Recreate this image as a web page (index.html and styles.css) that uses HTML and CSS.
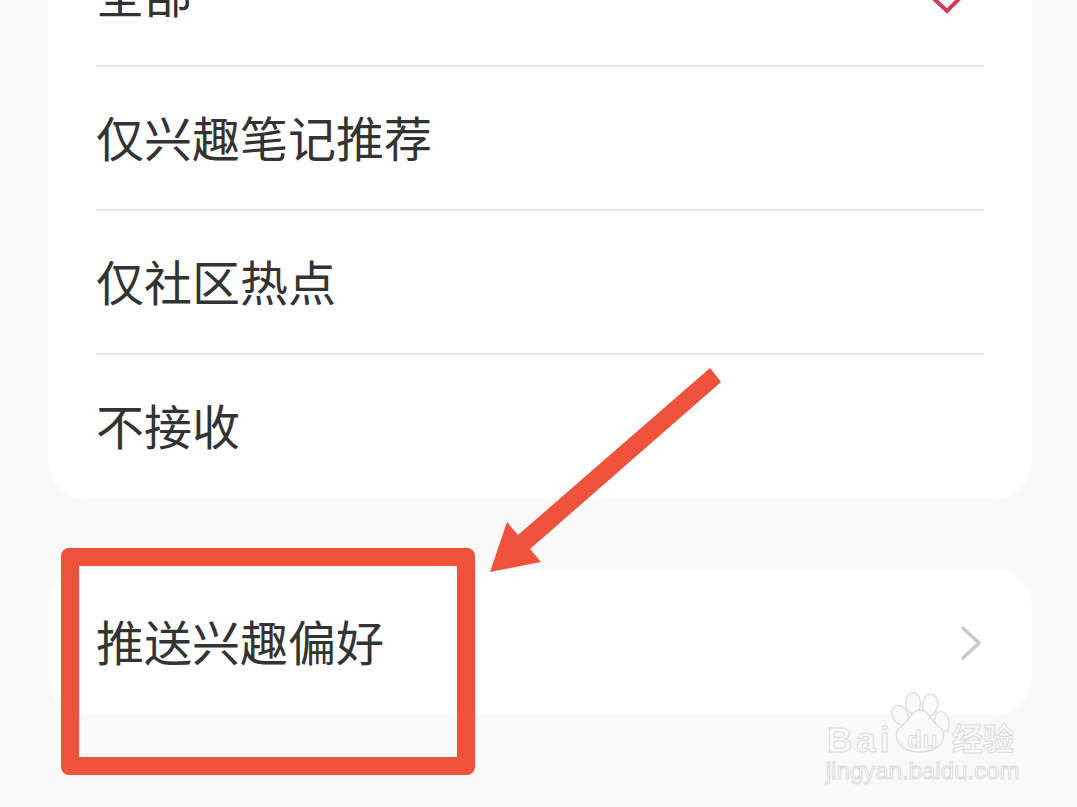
FILE: index.html
```html
<!DOCTYPE html>
<html lang="zh-CN">
<head>
<meta charset="utf-8">
<title>推送兴趣偏好</title>
<link rel="stylesheet" href="styles.css">
</head>
<body>
<main class="screen">
  <section class="card">
    <div class="row">
      <span>全部</span>
      <svg class="check" width="36" height="36" viewBox="0 0 36 36"><polyline points="2,20 18,35 33,20"/></svg>
    </div>
    <div class="row"><span>仅兴趣笔记推荐</span></div>
    <div class="row"><span>仅社区热点</span></div>
    <div class="row"><span>不接收</span></div>
  </section>
  <section class="card card-single">
    <div class="row">
      <span>推送兴趣偏好</span>
      <svg class="chevron" width="24" height="36" viewBox="0 0 24 36"><polyline points="4,3 20,18 4,33"/></svg>
    </div>
  </section>
</main>

<div class="highlight-box"></div>
<svg class="arrow" width="1077" height="807" viewBox="0 0 1077 807"><polygon points="710,368 721,382 530,549 541,562 490,572 507,522 518,535"/></svg>

<div class="watermark">
  <div class="wm-top">
    <span class="wm-bai">Bai</span>
    <svg class="wm-paw" width="66" height="62" viewBox="0 0 66 62">
      <ellipse cx="14" cy="23" rx="7.500" ry="10" transform="rotate(-25 14 23)"/>
      <ellipse cx="27" cy="11" rx="7.500" ry="10.500"/>
      <ellipse cx="44" cy="13" rx="7.500" ry="11" transform="rotate(8 44 13)"/>
      <ellipse cx="56" cy="30" rx="7" ry="10.500" transform="rotate(-15 56 30)"/>
      <path d="M34 18 C26 18 24 28 17 33 C11 37 9 42 11 47 C13 56 24 60 34 60 C44 60 55 56 57 47 C59 42 57 37 51 33 C44 28 42 18 34 18 Z"/>
    </svg>
    <span class="wm-du">du</span>
    <span class="wm-cn">经验</span>
  </div>
  <div class="wm-url">jingyan.baidu.com</div>
</div>
</body>
</html>
```
FILE: styles.css
```css
* { box-sizing: border-box; }

html, body {
  margin: 0;
  height: 807px;
  overflow: hidden;
  background: #f9f9f9;
}

body {
  position: relative;
  width: 1077px;
  font-family: "Noto Sans CJK SC", "Noto Sans", sans-serif;
  color: #333;
}

.screen {
  display: flex;
  flex-direction: column;
  gap: 72px;
  margin-top: -78px;
  padding: 0 45px 0 48px;
}

.card {
  background: #fff;
  border-radius: 36px;
  padding: 0 48px;
}

.row {
  display: flex;
  align-items: center;
  justify-content: space-between;
  height: 144px;
  font-size: 48px;
  line-height: 1;
}

.row + .row {
  box-shadow: 0 -1px 0 0 #e6e6e6, inset 0 1px 0 0 #e6e6e6;
}

.row span { margin-bottom: 4px; }

.check {
  margin-right: 19px;
  overflow: visible;
}
.check polyline {
  fill: none;
  stroke: #cc3c5c;
  stroke-width: 4;
}

.chevron {
  margin-right: 1px;
  margin-top: 2px;
}
.chevron polyline {
  fill: none;
  stroke: #c9c9c9;
  stroke-width: 3.500;
  stroke-linecap: round;
  stroke-linejoin: round;
}

.highlight-box {
  position: absolute;
  left: 61px;
  top: 548px;
  width: 414px;
  height: 227px;
  border: 18px solid #ef523a;
  border-radius: 8px;
}

.arrow {
  position: absolute;
  left: 0;
  top: 0;
}
.arrow polygon { fill: #ef523a; }

.watermark {
  position: absolute;
  left: 826px;
  top: 692px;
  width: 200px;
  color: #fafafa;
  font-family: "Liberation Sans", sans-serif;
  -webkit-text-stroke: 1px #dcdcdc;
}

.wm-top {
  position: relative;
  height: 66px;
}

.wm-bai {
  position: absolute;
  left: 1px;
  top: 33px;
  font-size: 35px;
  line-height: 30px;
  font-weight: 700;
  letter-spacing: 4px;
}

.wm-paw {
  position: absolute;
  left: 60px;
  top: 0;
}
.wm-paw ellipse, .wm-paw path {
  fill: #fafafa;
  stroke: #dcdcdc;
  stroke-width: 1.300;
}

.wm-du {
  position: absolute;
  left: 81px;
  top: 37px;
  font-size: 24px;
  line-height: 22px;
  font-weight: 700;
  letter-spacing: 1px;
}

.wm-cn {
  position: absolute;
  left: 126px;
  top: 29px;
  font-family: "Noto Sans CJK SC", sans-serif;
  font-size: 31px;
  line-height: 31px;
  font-weight: 700;
}

.wm-url {
  font-size: 24px;
  line-height: 26px;
  white-space: nowrap;
}
```
